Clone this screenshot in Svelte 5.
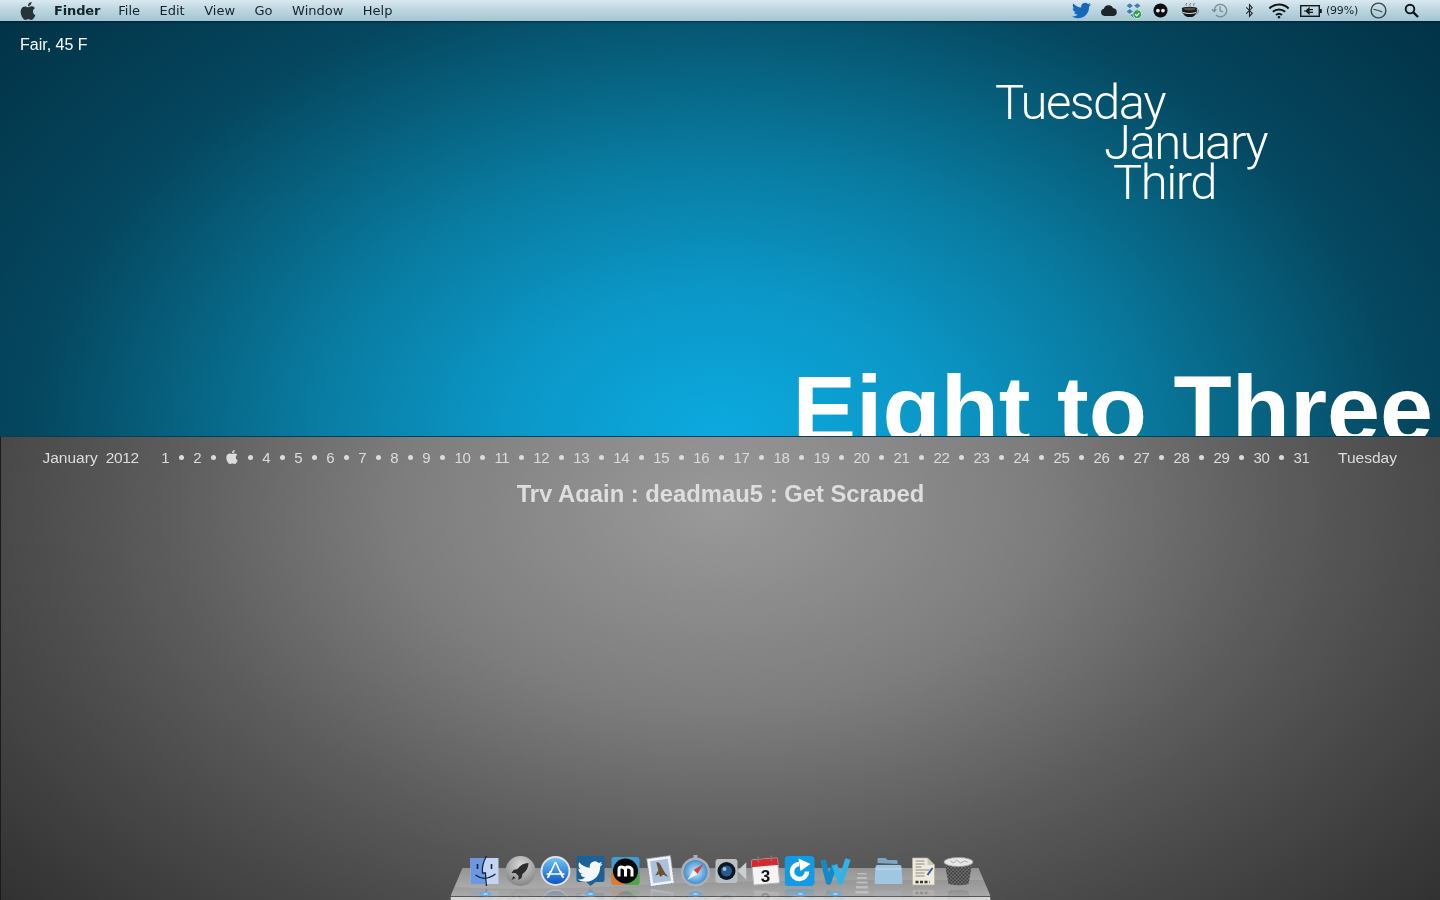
<script>
  const menus = ['File', 'Edit', 'View', 'Go', 'Window', 'Help'];
  const days = Array.from({ length: 31 }, (_, i) => i + 1);
  const apple = 'M12.152 6.896c-.948 0-2.415-1.078-3.96-1.04-2.04.027-3.91 1.183-4.961 3.014-2.117 3.675-.546 9.103 1.519 12.09 1.013 1.454 2.208 3.09 3.792 3.039 1.52-.065 2.09-.987 3.935-.987 1.831 0 2.35.987 3.96.948 1.637-.026 2.676-1.48 3.676-2.948 1.156-1.688 1.636-3.325 1.662-3.415-.039-.013-3.182-1.221-3.22-4.857-.026-3.04 2.48-4.494 2.597-4.559-1.429-2.09-3.623-2.324-4.39-2.376-2-.156-3.675 1.09-4.61 1.09zM15.53 3.83c.843-1.012 1.4-2.427 1.245-3.83-1.207.052-2.662.805-3.532 1.818-.78.896-1.454 2.338-1.273 3.714 1.338.104 2.715-.688 3.559-1.701';
  const bird = 'M23.953 4.57a10 10 0 01-2.825.775 4.958 4.958 0 002.163-2.723c-.951.555-2.005.959-3.127 1.184a4.92 4.92 0 00-8.384 4.482C7.69 8.095 4.067 6.13 1.64 3.162a4.822 4.822 0 00-.666 2.475c0 1.71.87 3.213 2.188 4.096a4.904 4.904 0 01-2.228-.616v.06a4.923 4.923 0 003.946 4.827 4.996 4.996 0 01-2.212.085 4.936 4.936 0 004.604 3.417 9.867 9.867 0 01-6.102 2.105c-.39 0-.779-.023-1.17-.067a13.995 13.995 0 007.557 2.209c9.053 0 13.998-7.496 13.998-13.985 0-.21 0-.42-.015-.63A9.935 9.935 0 0024 4.59z';
  const lamps = [485, 590, 695, 800, 835];
</script>

<div class="screen">
  <header class="menubar">
    <svg class="apple-logo" viewBox="0 0 24 24"><path d={apple} fill="#26343a" /></svg>
    <strong class="app">Finder</strong>
    {#each menus as m}<span class="menu">{m}</span>{/each}
    <div class="status">
      <svg class="st tw" viewBox="0 0 24 24"><path d={bird} fill="#1569b8" /></svg>
      <svg class="st cloud" viewBox="0 0 20 14"><path d="M5 13a4 4 0 0 1-.7-7.9A5.5 5.5 0 0 1 14.6 4.4 4.4 4.4 0 0 1 15.5 13z" fill="#1d2528" /></svg>
      <svg class="st dbx" viewBox="0 0 18 18">
        <path d="M5 1 9 4 5 7 1 4zM13 1l4 3-4 3-4-3zM5 7l4 3-4 3-4-3zM13 7l4 3-4 3-4-3zM5 14l4-3 4 3-4 3z" fill="#3d7fb5" stroke="#e8f2f6" stroke-width=".6" />
        <circle cx="13" cy="13" r="4.6" fill="#2e9e48" stroke="#e8f2f6" stroke-width=".8" />
        <path d="M10.8 13l1.6 1.7 2.8-3.2" fill="none" stroke="#fff" stroke-width="1.3" />
      </svg>
      <svg class="st mo" viewBox="0 0 16 16"><circle cx="8" cy="8" r="7.5" fill="#0c0f10" /><circle cx="5.2" cy="8" r="2" fill="#e6e6e6" /><circle cx="10.6" cy="8" r="2" fill="#e6e6e6" /></svg>
      <svg class="st cup" viewBox="0 0 20 18">
        <path d="M6 4q-1-2 1-3M10 4q-1-2 1-3M14 4q-1-2 1-3" fill="none" stroke="#6c7478" stroke-width="1" />
        <path d="M1.5 7q0-2 8-2t8 2q0 7-5 9H7Q1.5 14 1.5 7z" fill="#15181a" />
        <ellipse cx="9.5" cy="7.4" rx="6.4" ry="1.5" fill="#5a4a3c" />
        <path d="M2.6 11q7 2.4 13.8 0" fill="none" stroke="#d7dbdc" stroke-width="1.1" />
        <path d="M17 8q2.4 0 2 2t-3 3" fill="none" stroke="#8b9397" stroke-width="1.2" />
      </svg>
      <svg class="st tm" viewBox="0 0 18 18" fill="none" stroke="#7a8b92" stroke-width="1.4"><path d="M3.4 9a6.6 6.6 0 1 1 2 4.8" /><path d="M1 7.6 3.4 10l2.3-2.4" /><path d="M9.6 4.6V9l3 1.6" /></svg>
      <svg class="st bt" viewBox="0 0 10 16" fill="none" stroke="#1b2428" stroke-width="1.2"><path d="M1.4 4.6 8 11 5 14.4V1.6L8 5 1.4 11.4" /></svg>
      <svg class="st wifi" viewBox="0 0 22 16" fill="none" stroke="#0f1618" stroke-width="2"><path d="M1.4 5.4a14 14 0 0 1 19.2 0" /><path d="M4.8 8.8a9.2 9.2 0 0 1 12.4 0" /><path d="M8 12a4.6 4.6 0 0 1 6 0" /><circle cx="11" cy="14.2" r=".9" fill="#0f1618" stroke-width="1" /></svg>
      <svg class="st batt" viewBox="0 0 22 12"><rect x=".7" y=".7" width="18.6" height="10.6" fill="none" stroke="#111a1d" stroke-width="1.4" /><rect x="20" y="4" width="1.8" height="4" fill="#111a1d" /><path d="M4 6h5M9 3.2v5.6L6 6zM9.5 4.6h3.5M9.5 7.4h3.5" stroke="#111a1d" stroke-width="1.2" fill="#111a1d" /></svg>
      <span class="pct">(99%)</span>
      <svg class="st clock" viewBox="0 0 18 18" fill="none" stroke="#3a474c" stroke-width="1.5"><circle cx="9" cy="9" r="7.8" /><path d="M3.6 7.6 9 9l4 1.6" stroke-width="1.2" /></svg>
      <svg class="st search" viewBox="0 0 16 16" fill="none" stroke="#0d1416" stroke-width="2"><circle cx="6.4" cy="6.4" r="4.6" /><path d="m10 10 5 5" stroke-width="2.4" /></svg>
    </div>
  </header>

  <section class="upper">
    <p class="weather">Fair, 45 F</p>
    <div class="date">
      <div class="d1">Tuesday</div>
      <div class="d2">January</div>
      <div class="d3">Third</div>
    </div>
    <h1 class="hero">Eight to Three</h1>
  </section>

  <section class="lower">
    <div class="calendar">
      <span class="month">January</span>
      <span class="year">2012</span>
      <div class="days">
        {#each days as d}
          {#if d === 3}
            <svg class="today" viewBox="0 0 24 24"><path d={apple} fill="#dcdcdc" /></svg>
          {:else}
            <span class="day">{d}</span>
          {/if}
          {#if d < 31}<i class="dot"></i>{/if}
        {/each}
      </div>
      <span class="weekday">Tuesday</span>
    </div>
    <div class="track">Try Again : deadmau5 : Get Scraped</div>

    <div class="dock">
      <svg class="shelf" viewBox="0 0 540 45" preserveAspectRatio="none">
        <defs>
          <linearGradient id="sh" x1="0" y1="0" x2="0" y2="1">
            <stop offset="0" stop-color="#858585" />
            <stop offset="1" stop-color="#a8a8a8" />
          </linearGradient>
        </defs>
        <path d="M12 13H528L540 41H0z" fill="url(#sh)" />
        <path d="M12 13H528L533 25Q300 24 170 31 70 36 4 32z" fill="#fff" opacity=".12" />
        <path d="M407 18h9v1.5h-9zM406.5 22h10v2h-10zM406 26.500h11v2h-11zM405.500 31h12v2.500h-12zM405 36h13v2.500h-13z" fill="#c8c8c8" opacity=".75" />
        <path d="M0 41H540V42H0z" fill="#555" />
        <path d="M0 42H540L540 45H0z" fill="#d6d6d6" />
      </svg>
      <div class="icons">
        <svg class="ic" viewBox="0 0 32 32">
          <rect x="1" y="3" width="28" height="26" fill="#c3d5f2" />
          <path d="M1 3h15q-4 8-3 15l3 0 0 11H1z" fill="#6a97e0" />
          <path d="M17 1q-5 9-4 17h3q0 6 1 13" fill="none" stroke="#12233d" stroke-width="1.3" />
          <path d="M6 20q9 7 20-1" fill="none" stroke="#12233d" stroke-width="1.2" />
          <path d="M8 9v5M22 9v5" stroke="#12233d" stroke-width="1.6" />
        </svg>
        <svg class="ic" viewBox="0 0 32 32">
          <defs><radialGradient id="lp" cx=".5" cy=".3" r=".8"><stop offset="0" stop-color="#d8d8d8" /><stop offset="1" stop-color="#777" /></radialGradient></defs>
          <circle cx="16" cy="16" r="15" fill="url(#lp)" />
          <path d="M24 8q-7 0-11 6l-4 1-2 3 4 0 3 3 0 4 3-2 1-4q6-4 6-11z" fill="#2c2c2e" />
          <path d="M9 21l-2 4 4-2z" fill="#2c2c2e" />
        </svg>
        <svg class="ic" viewBox="0 0 32 32">
          <defs><linearGradient id="as" x1="0" y1="0" x2="0" y2="1"><stop offset="0" stop-color="#6cc2f6" /><stop offset="1" stop-color="#0a55c6" /></linearGradient></defs>
          <circle cx="16" cy="16" r="15" fill="#dfe3e6" />
          <circle cx="16" cy="16" r="13" fill="url(#as)" />
          <path d="M16 7 9 22M16 7l7 15M7 19h18M11 16l-3 7M21 16l3 7" stroke="#fff" stroke-width="1.6" fill="none" />
        </svg>
        <svg class="ic" viewBox="0 0 32 32">
          <path d="M2 3q0-2 2-2h24q2 0 2 2v22q0 2-2 2h-7l-5 4-4-4H4q-2 0-2-2z" fill="#1b5f96" />
          <path d={bird} transform="translate(3 4) scale(1.05)" fill="#f4f8fb" />
        </svg>
        <svg class="ic" viewBox="0 0 32 32">
          <rect x="2" y="2" width="28" height="28" rx="3" fill="#3f9bd5" />
          <path d="M2 16v11q0 3 3 3h11z" fill="#e07a2a" />
          <path d="M30 16v11q0 3-3 3H16z" fill="#4aa83f" />
          <circle cx="16" cy="16" r="12.5" fill="#060606" />
          <path d="M9.500 21.500v-7q0-2.500 2.500-2.500t4 2.500v7M16 14.500q0-2.500 2.500-2.500t4 2.500v7" fill="none" stroke="#fff" stroke-width="3" />
        </svg>
        <svg class="ic" viewBox="0 0 32 32">
          <g transform="rotate(-8 16 16)">
            <rect x="4" y="2" width="24" height="28" fill="#f3f3f3" stroke="#7b8fb8" stroke-dasharray="2 1" />
            <rect x="7" y="5" width="18" height="22" fill="#a9c1de" />
            <path d="M13 7q3-1 4 3l3 8 3 5-5-3-3 2-1-3-4 1 4-5z" fill="#6a5233" />
          </g>
        </svg>
        <svg class="ic" viewBox="0 0 32 32">
          <defs><radialGradient id="sf"><stop offset="0" stop-color="#cfe9fa" /><stop offset="1" stop-color="#3e8fd0" /></radialGradient></defs>
          <circle cx="16" cy="17" r="14.5" fill="#aab0b5" />
          <circle cx="16" cy="17" r="12" fill="url(#sf)" />
          <path d="M24 9 14 15l4 4z" fill="#e5393a" />
          <path d="M8 25l6-10 4 4z" fill="#f4f4f4" />
          <rect x="14" y="0" width="4" height="3" fill="#aab0b5" />
        </svg>
        <svg class="ic" viewBox="0 0 32 32">
          <rect x="1" y="4" width="22" height="24" rx="3" fill="#b9bfc3" />
          <circle cx="12" cy="16" r="9" fill="#0c1622" />
          <circle cx="12" cy="16" r="5.500" fill="#26598a" />
          <circle cx="10" cy="14" r="2" fill="#9bc0e0" />
          <path d="M23 16 32 7v18z" fill="#c8ced1" />
        </svg>
        <svg class="ic" viewBox="0 0 32 32">
          <g transform="rotate(-5 16 16)">
            <rect x="3" y="4" width="26" height="25" rx="1" fill="#f5f5f5" stroke="#b5b5b5" />
            <path d="M3 4h26v7H3z" fill="#d4292c" />
            <rect x="9" y="1" width="1.6" height="6" fill="#777" />
            <rect x="22" y="1" width="1.6" height="6" fill="#777" />
          </g>
          <text x="16" y="26.500" class="cal-num">3</text>
        </svg>
        <svg class="ic" viewBox="0 0 32 32">
          <rect x="0" y="1" width="30" height="30" rx="4" fill="#109ae6" />
          <path d="M22.500 16.500a7.500 7.500 0 1 1-8-7.500" fill="none" stroke="#fff" stroke-width="4.600" />
          <path d="M14 3.500 26 9l-10 7z" fill="#fff" />
        </svg>
        <svg class="ic" viewBox="0 0 32 32">
          <path d="M3.500 5 9 27l6-17" fill="none" stroke="#1488c6" stroke-width="5.500" stroke-linejoin="round" />
          <path d="M15 10l6 17 7.500-23" fill="none" stroke="#2fb2e8" stroke-width="5.500" stroke-linejoin="round" />
        </svg>
        <div class="sep"></div>
        <svg class="ic" viewBox="0 0 32 32">
          <path d="M5 8V4q0-1 1-1h7l2 2h8q2 0 2 1v3z" fill="#7aa5c6" />
          <path d="M3 12q0-2 2-2h22q2 0 2 2l1 16q0 1-2 1H4q-2 0-2-1z" fill="#9fc6e2" />
          <path d="M3 14h26" stroke="#c3def0" stroke-width="1" />
        </svg>
        <svg class="ic" viewBox="0 0 32 32">
          <path d="M5 3h15l7 7v20H5z" fill="#efeadb" stroke="#b6b09e" stroke-width=".7" />
          <path d="M20 3v7h7z" fill="#ccc6b4" />
          <path d="M8 6h9M8 9h9M8 12h6M8 15h14M8 18h9M8 21h9" stroke="#8a887f" stroke-width="1" />
          <path d="M25 13 20 20" stroke="#2c5a9a" stroke-width="2" />
          <path d="M8 27h14" stroke="#333" stroke-width="2.400" stroke-dasharray="3 1.500" />
        </svg>
        <svg class="ic" viewBox="0 0 32 32">
          <defs>
            <pattern id="mesh" width="2.500" height="2.500" patternUnits="userSpaceOnUse" patternTransform="rotate(45)">
              <rect width="2.500" height="2.500" fill="#3e3e3e" />
              <path d="M0 0h2.500M0 0v2.500" stroke="#9a9a9a" stroke-width=".7" />
            </pattern>
          </defs>
          <path d="M2 7 6 29q10 2.400 20 0l4-22z" fill="url(#mesh)" />
          <ellipse cx="16" cy="7" rx="14.500" ry="4.500" fill="#e6e6e6" stroke="#9d9d9d" stroke-width=".8" />
          <path d="M8 6l3 2 3-3 4 3 4-2 3 1" stroke="#aaa" stroke-width="1" fill="none" />
        </svg>
      </div>
      {#each lamps as x}<b class="lamp" style="left:{x - 450 - 7}px"></b>{/each}
    </div>
  </section>

  <svg class="grain" width="1440" height="900" aria-hidden="true">
    <filter id="noise"><feTurbulence type="fractalNoise" baseFrequency=".85" numOctaves="2" /><feColorMatrix type="saturate" values="0" /></filter>
    <rect width="1440" height="900" filter="url(#noise)" />
  </svg>
</div>

<style>
  :global(body) { margin: 0; background: #000; overflow: hidden; }
  .screen {
    width: 1440px;
    height: 900px;
    display: flex;
    flex-direction: column;
    overflow: hidden;
    font-family: "Liberation Sans", Arial, sans-serif;
    position: relative;
  }
  .grain { position: absolute; inset: 0; opacity: .05; pointer-events: none; z-index: 1; mix-blend-mode: overlay; }
  .menubar {
    height: 21px;
    flex: none;
    display: flex;
    align-items: center;
    background: linear-gradient(#d9e9f0 0, #c3dae4 35%, #a3c5d2 100%);
    box-shadow: 0 1px 2px rgba(0, 0, 0, .45);
    font: 13px "DejaVu Sans", sans-serif;
    color: #16242a;
    position: relative;
    z-index: 2;
  }
  .apple-logo { width: 18px; height: 18px; margin-left: 19px; margin-right: 17px; flex: none; }
  .app { font-size: 13px; margin-right: 18px; letter-spacing: -.15px; }
  .menu { margin-right: 19.500px; }
  .status { margin-left: auto; display: flex; align-items: center; height: 100%; padding-right: 21px; }
  .st { flex: none; display: block; }
  .tw { width: 21px; height: 19px; margin-right: 8px; }
  .cloud { width: 18px; height: 13px; margin-right: 7px; }
  .dbx { width: 17px; height: 17px; margin-right: 11px; }
  .mo { width: 15px; height: 15px; margin-right: 12px; }
  .cup { width: 20px; height: 17px; margin-right: 11px; }
  .tm { width: 17px; height: 17px; margin-right: 17px; }
  .bt { width: 9px; height: 15px; margin-right: 14px; }
  .wifi { width: 22px; height: 16px; margin-right: 10px; }
  .batt { width: 22px; height: 12px; margin-right: 4px; }
  .pct { font: 11px "DejaVu Sans", sans-serif; margin-right: 12px; letter-spacing: -.2px; }
  .clock { width: 17px; height: 17px; margin-right: 17px; }
  .search { width: 15px; height: 15px; }

  .upper {
    height: 416px;
    flex: none;
    box-sizing: border-box;
    display: flex;
    flex-direction: column;
    overflow: hidden;
    color: #fff;
    background: radial-gradient(ellipse 780px 530px at 720px 415px, #0ba9e0 0%, #0a95c6 28%, #087aa0 52%, #06607e 70%, #04465e 88%, #013246 120%);
    background-color: #013246;
    border-bottom: 1px solid #043e54;
  }
  .weather { margin: 15px 0 0 20px; font-size: 16px; line-height: 17px; }
  .date {
    margin: 30px 0 0 995px;
    font: 300 49px/40px Roboto, sans-serif;
    letter-spacing: -1.500px;
  }
  .d2 { margin-left: 109px; }
  .d3 { margin-left: 118px; }
  .hero {
    margin: auto 7px 0 0;
    height: 64px;
    text-align: right;
    font: 700 95.300px/75px "Liberation Sans", sans-serif;
    white-space: nowrap;
  }

  .lower {
    flex: 1;
    display: flex;
    flex-direction: column;
    position: relative;
    background: radial-gradient(ellipse 800px 500px at 720px 70px, #989898 0%, #7c7c7c 40%, #5a5a5a 70%, #484848 90%, #2c2c2c 125%);
    background-color: #2c2c2c;
    border-left: 1px solid #1a1a1a;
    box-sizing: border-box;
  }
  .calendar {
    display: flex;
    align-items: center;
    height: 20px;
    margin-top: 11px;
    padding-left: 41.500px;
    font-size: 15.500px;
    color: #dcdcdc;
    white-space: nowrap;
    position: relative;
    z-index: 1;
  }
  .month { margin-right: 8px; }
  .year { letter-spacing: -.35px; }
  .days { display: flex; align-items: center; gap: 10px; margin: -1px 0 0 22.500px; font-size: 15px; }
  .day { letter-spacing: -.34px; }
  .dot { width: 5px; height: 5px; border-radius: 50%; background: #dcdcdc; margin: 0 -.500px; }
  .today { width: 14px; height: 14px; margin: -1px -.500px 0; }
  .weekday { margin-left: 28.500px; }
  .track {
    height: 21px;
    margin-top: 13px;
    overflow: hidden;
    text-align: center;
    font-size: 23.800px;
    font-weight: 700;
    line-height: 26px;
    color: #dedede;
    position: relative;
    z-index: 1;
  }

  .dock {
    width: 540px;
    height: 45px;
    margin: auto auto 0;
    position: relative;
    z-index: 1;
    transform: translateX(-.500px);
  }
  .shelf { position: absolute; inset: 0; width: 100%; height: 100%; display: block; }
  .icons {
    position: relative;
    display: flex;
    gap: 3px;
    padding-left: 19px;
    -webkit-box-reflect: below 1px linear-gradient(transparent 62%, rgba(255, 255, 255, .3));
  }
  .ic { width: 32px; height: 32px; flex: none; display: block; }
  .sep { width: 15px; flex: none; }
  .cal-num { font: 700 17px "Liberation Sans", sans-serif; text-anchor: middle; fill: #111; }
  .lamp {
    position: absolute;
    bottom: 3px;
    width: 14px;
    height: 6px;
    background: radial-gradient(ellipse at center, #cdeaff 0, #5fa8e8 35%, transparent 72%);
  }
</style>
